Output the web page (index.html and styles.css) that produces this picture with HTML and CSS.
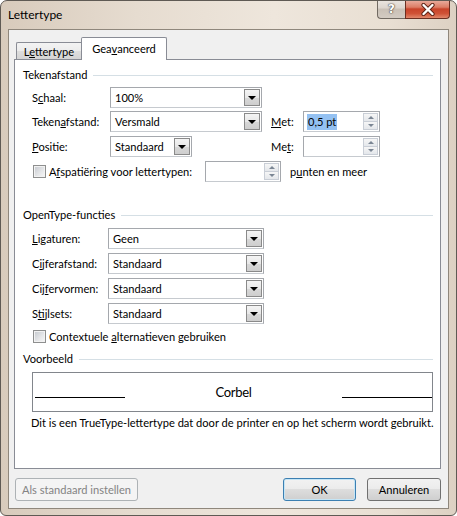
FILE: index.html
```html
<!DOCTYPE html>
<html lang="nl">
<head>
<meta charset="utf-8">
<title>Lettertype</title>
<link rel="stylesheet" href="styles.css">
</head>
<body>
<div class="window">
  <div class="titlebar">
    <div class="title">Lettertype</div>
    <div class="caption">
      <div class="cap-btn help">?</div>
      <div class="cap-btn close">
        <svg width="16" height="13" viewBox="0 0 16 13"><path d="M3.5 2 L12.5 11 M12.5 2 L3.5 11" stroke="#5a2216" stroke-width="4.2" stroke-linecap="round"/><path d="M3.5 2 L12.5 11 M12.5 2 L3.5 11" stroke="#ffffff" stroke-width="2.4" stroke-linecap="round"/></svg>
      </div>
    </div>
  </div>
  <div class="client">
    <div class="tabs">
      <div class="tab">L<u>e</u>ttertype</div>
      <div class="tab active">Gea<u>v</u>anceerd</div>
    </div>
    <div class="panel">
      <div class="group-head"><span>Tekenafstand</span><i></i></div>

      <div class="row r1">
        <span class="lbl w78">S<u>c</u>haal:</span>
        <div class="select w152"><span class="val">100%</span><span class="dd"></span></div>
      </div>
      <div class="row r2">
        <span class="lbl w78">Teken<u>a</u>fstand:</span>
        <div class="select w152"><span class="val">Versmald</span><span class="dd"></span></div>
        <span class="lbl met"><u>M</u>et:</span>
        <div class="spin w77"><span class="val"><span class="sel">0,5 pt</span></span><span class="arrows"><i class="up"></i><i class="down"></i></span></div>
      </div>
      <div class="row r3">
        <span class="lbl w78"><u>P</u>ositie:</span>
        <div class="select w82"><span class="val">Standaard</span><span class="dd"></span></div>
        <span class="lbl met met2">Me<u>t</u>:</span>
        <div class="spin w77"><span class="val"></span><span class="arrows"><i class="up"></i><i class="down"></i></span></div>
      </div>
      <div class="row r4">
        <span class="cb"></span>
        <span class="lbl cbl w156">A<u>f</u>spatiëring voor lettertypen:</span>
        <div class="spin w76"><span class="val"></span><span class="arrows"><i class="up"></i><i class="down"></i></span></div>
        <span class="lbl after">p<u>u</u>nten en meer</span>
      </div>

      <div class="group-head g2"><span>OpenType-functies</span><i></i></div>

      <div class="row o1">
        <span class="lbl w76"><u>L</u>igaturen:</span>
        <div class="select w156"><span class="val">Geen</span><span class="dd"></span></div>
      </div>
      <div class="row o2">
        <span class="lbl w76">C<u>i</u>jferafstand:</span>
        <div class="select w156"><span class="val">Standaard</span><span class="dd"></span></div>
      </div>
      <div class="row o2">
        <span class="lbl w76">Cij<u>f</u>ervormen:</span>
        <div class="select w156"><span class="val">Standaard</span><span class="dd"></span></div>
      </div>
      <div class="row o2">
        <span class="lbl w76">S<u>t</u>ijlsets:</span>
        <div class="select w156"><span class="val">Standaard</span><span class="dd"></span></div>
      </div>
      <div class="row c2">
        <span class="cb"></span>
        <span class="lbl cbl">Contextuele <u>a</u>lternatieven gebruiken</span>
      </div>

      <div class="group-head g3"><span>Voorbeeld</span><i></i></div>

      <div class="preview">
        <span class="pline"></span>
        <span class="ptext">Corbel</span>
        <span class="pline"></span>
      </div>
      <div class="desc">Dit is een TrueType-lettertype dat door de printer en op het scherm wordt gebruikt.</div>
    </div>
    <div class="buttons">
      <div class="btn disabled w123">Als standaard instellen</div>
      <div class="btn default w73">OK</div>
      <div class="btn w74">Annuleren</div>
    </div>
  </div>
</div>
</body>
</html>
```

FILE: styles.css
```css
html, body {
  margin: 0;
  padding: 0;
  background: #ffffff;
}

body {
  font-family: Lato, "Liberation Sans", Arial, sans-serif;
  font-size: 11.1px;
  color: #000000;
}

u {
  text-decoration: underline;
  text-underline-offset: 1px;
}

.window {
  width: 457px;
  height: 516px;
  box-sizing: border-box;
  border: 1px solid #5f5a54;
  border-radius: 7px 7px 6px 6px;
  background: linear-gradient(to right, #d8cbbc 0%, #e6dcd0 30%, #eee6dc 60%, #e9dfd3 85%, #ddd1c3 100%);
  display: flex;
  flex-direction: column;
  overflow: hidden;
}

/* title bar */
.titlebar {
  height: 28px;
  flex: none;
  display: flex;
  align-items: flex-start;
}

.title {
  padding-left: 7px;
  line-height: 28px;
  height: 28px;
  font-size: 12px;
  color: #000;
}

.caption {
  margin-left: auto;
  margin-right: 6px;
  display: flex;
  height: 19px;
  margin-top: -1px;
}

.cap-btn {
  height: 19px;
  box-sizing: border-box;
  display: flex;
  align-items: center;
  justify-content: center;
}

.help {
  width: 28px;
  border: 1px solid #716a62;
  border-top: none;
  border-right: none;
  border-radius: 0 0 0 4px;
  background: linear-gradient(#ebe6e1 0%, #dcd5ce 45%, #c9c0b6 50%, #d3cbc2 100%);
  color: #ffffff;
  font-family: "DejaVu Sans", sans-serif;
  font-weight: bold;
  font-size: 12px;
  text-shadow: 0 0 1px #4d4741, 0 0 1px #4d4741, 0 0 2px #6d655d;
}

.close {
  width: 45px;
  border: 1px solid #6b2f22;
  border-top: none;
  border-radius: 0 0 4px 0;
  background: linear-gradient(#eab0a2 0%, #dc7d66 40%, #c8432a 50%, #cf5236 75%, #e1876b 100%);
}

/* client */
.client {
  flex: 1;
  margin: 0 7px 6px 7px;
  border: 1px solid #8f877c;
  background: #f0f0f0;
  display: flex;
  flex-direction: column;
  padding: 7px 7px 0 5px;
}

.tabs {
  height: 22px;
  display: flex;
  align-items: flex-end;
  padding-left: 2px;
  position: relative;
  z-index: 1;
  flex: none;
}

.tab {
  box-sizing: border-box;
  height: 17px;
  width: 65px;
  border: 1px solid #898c95;
  border-bottom: none;
  border-right: none;
  background: linear-gradient(#f3f3f3 0%, #ececec 50%, #dedede 50%, #d4d4d4 100%);
  text-align: center;
  line-height: 17px;
  border-radius: 2px 0 0 0;
}

.tab.active {
  height: 23px;
  width: 86px;
  margin-bottom: -1px;
  background: #ffffff;
  border-right: 1px solid #898c95;
  border-radius: 2px 2px 0 0;
  line-height: 22px;
}

.panel {
  height: 410px;
  box-sizing: border-box;
  border: 1px solid #898c95;
  background: #ffffff;
  padding: 7px 7px 0 8px;
  flex: none;
}

.group-head {
  height: 16px;
  display: flex;
  align-items: center;
  line-height: 16px;
}

.group-head i {
  flex: 1;
  height: 1px;
  background: #d5dfe5;
  margin-left: 6px;
}

.g2 { margin-top: 25px; }
.g3 { margin-top: 4px; }

.row {
  height: 21px;
  display: flex;
  align-items: center;
  padding-left: 9px;
}

.r1 { margin-top: 4px; }
.r2 { margin-top: 3px; }
.r3, .r4 { margin-top: 4px; }
.o1 { margin-top: 5px; }
.o2 { margin-top: 4px; }
.c2 { margin-top: 2px; }

.lbl { flex: none; white-space: nowrap; }
.w76 { width: 76px; }
.w78 { width: 78px; }
.w82 { width: 82px; }
.w152 { width: 152px; }
.w156 { width: 156px; }
.w77 { width: 77px; }
.w73 { width: 73px; }
.w74 { width: 74px; }
.w123 { width: 123px; }

.met {
  width: 32px;
  margin-left: 9px;
}

.met2 { margin-left: 79px; }

.select, .spin {
  flex: none;
  box-sizing: border-box;
  height: 21px;
  border: 1px solid #a5a8ad;
  border-bottom-color: #c6cacf;
  background: #ffffff;
  display: flex;
  padding: 1px;
}

.select .val, .spin .val {
  flex: 1;
  padding-left: 3px;
  line-height: 17px;
  white-space: nowrap;
  overflow: hidden;
}

.spin .val { padding-left: 2px; }

.sel {
  background: #94c1f2;
  padding: 0 1px;
  display: inline-block;
  line-height: 16px;
}

.dd {
  flex: none;
  width: 16px;
  box-sizing: border-box;
  border: 1px solid #8a8a8a;
  background: linear-gradient(#f4f4f4 0%, #e8e8e8 50%, #d8d8d8 51%, #cecece 100%);
  display: flex;
  align-items: center;
  justify-content: center;
}

.dd::after {
  content: "";
  width: 0;
  height: 0;
  border-left: 4px solid transparent;
  border-right: 4px solid transparent;
  border-top: 4px solid #000000;
  margin-top: 1px;
}

.arrows {
  flex: none;
  width: 15px;
  display: flex;
  flex-direction: column;
}

.arrows i {
  flex: 1;
  box-sizing: border-box;
  border: 1px solid #c9ced6;
  background: linear-gradient(#f6f6f6, #e4e7eb);
  display: flex;
  align-items: center;
  justify-content: center;
}

.arrows i + i { border-top: none; }

.arrows .up::after, .arrows .down::after {
  content: "";
  width: 0;
  height: 0;
  border-left: 3px solid transparent;
  border-right: 3px solid transparent;
}

.arrows .up::after { border-bottom: 3px solid #7b8694; }
.arrows .down::after { border-top: 3px solid #7b8694; }

.cb {
  flex: none;
  width: 13px;
  height: 13px;
  box-sizing: border-box;
  margin-left: 1px;
  border: 1px solid #8e8f8f;
  background: linear-gradient(135deg, #c4c8ce 0%, #e6e7e9 60%, #f7f7f7 100%);
  box-shadow: inset 0 0 0 1px #f2f2f2;
}

.cbl { margin-left: 3px; }
.w156.cbl { width: 156px; }

.after { margin-left: 9px; }

.preview {
  margin: 5px 0 0 9px;
  height: 40px;
  box-sizing: border-box;
  border: 1px solid #82868c;
  display: flex;
  align-items: flex-start;
  padding-left: 2px;
}

.pline {
  flex: none;
  width: 90px;
  height: 1px;
  background: #000000;
  margin-top: 24px;
}

.ptext {
  flex: 1;
  text-align: center;
  font-size: 13px;
  line-height: 18px;
  margin-top: 10px;
  letter-spacing: -0.3px;
}

.desc {
  margin: 3px 0 0 8px;
  line-height: 16px;
  white-space: nowrap;
}

/* buttons */
.buttons {
  margin-top: 9px;
  margin-left: 1px;
  display: flex;
  align-items: center;
}

.btn {
  height: 23px;
  box-sizing: border-box;
  border: 1px solid #707070;
  border-radius: 3px;
  background: linear-gradient(#f2f2f2 0%, #ebebeb 50%, #dddddd 50%, #cfcfcf 100%);
  text-align: center;
  line-height: 21px;
  white-space: nowrap;
}

.btn.disabled {
  border-color: #adb2b5;
  background: #f4f4f4;
  color: #838383;
}

.btn.default {
  margin-left: auto;
  border-color: #3c7fb1;
  box-shadow: inset 0 0 0 1px #c4e5f6;
}

.btn + .btn.w74 { margin-left: 11px; }
```
